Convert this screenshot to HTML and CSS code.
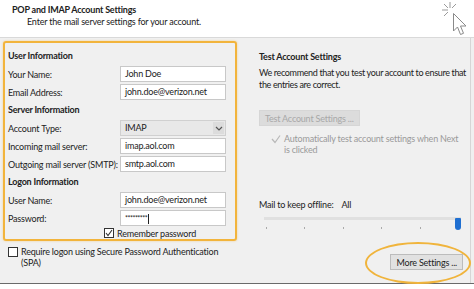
FILE: index.html
```html
<!DOCTYPE html>
<html lang="en">
<head>
    <meta charset="UTF-8">
    <title>POP and IMAP Account Settings</title>
    <link rel="stylesheet" href="styles.css">
</head>
<body>
    <div class="header">
        <div class="title">POP and IMAP Account Settings</div>
        <div class="subtitle">Enter the mail server settings for your account.</div>
        <svg class="cursor" width="30" height="36" viewBox="0 0 30 36">
            <g stroke="#9a9a9a" stroke-width="1" fill="none">
                <line x1="9" y1="1" x2="9" y2="7"/>
                <line x1="1" y1="9" x2="7" y2="9"/>
                <line x1="3" y1="3" x2="7" y2="7"/>
                <line x1="15" y1="3" x2="11" y2="7"/>
                <line x1="3" y1="15" x2="7" y2="11"/>
            </g>
            <path d="M12.5 12.5 L12.5 30 L16.5 26 L19.5 33.5 L22.5 32.3 L19.5 25 L25 25 Z" fill="#fff" stroke="#8a8a8a" stroke-width="1"/>
        </svg>
    </div>

    <div class="main">
        <div class="left">
            <div class="highlight">
                <div class="section">User Information</div>
                <div class="row">
                    <label>Your Name:</label>
                    <div class="field">John Doe</div>
                </div>
                <div class="row">
                    <label>Email Address:</label>
                    <div class="field">john.doe@verizon.net</div>
                </div>
                <div class="section">Server Information</div>
                <div class="row">
                    <label>Account Type:</label>
                    <div class="field select">
                        <span>IMAP</span>
                        <span class="arrow">
                            <svg width="8" height="5" viewBox="0 0 8 5"><path d="M1 1 L4 4 L7 1" stroke="#555" stroke-width="1.2" fill="none"/></svg>
                        </span>
                    </div>
                </div>
                <div class="row">
                    <label>Incoming mail server:</label>
                    <div class="field">imap.aol.com</div>
                </div>
                <div class="row">
                    <label>Outgoing mail server (SMTP):</label>
                    <div class="field">smtp.aol.com</div>
                </div>
                <div class="section">Logon Information</div>
                <div class="row">
                    <label>User Name:</label>
                    <div class="field">john.doe@verizon.net</div>
                </div>
                <div class="row">
                    <label>Password:</label>
                    <div class="field password">*********<span class="caret"></span></div>
                </div>
                <div class="remember">
                    <span class="checkbox checked">
                        <svg width="8" height="8" viewBox="0 0 8 8"><path d="M1 4 L3 6.5 L7 1" stroke="#333" stroke-width="1.1" fill="none"/></svg>
                    </span>
                    Remember password
                </div>
            </div>
            <div class="spa">
                <span class="checkbox"></span>
                <span>Require logon using Secure Password Authentication (SPA)</span>
            </div>
        </div>

        <div class="right">
            <div class="section">Test Account Settings</div>
            <p class="note">We recommend that you test your account to ensure that the entries are correct.</p>
            <div class="btn disabled">Test Account Settings ...</div>
            <div class="auto">
                <span class="tick">
                    <svg width="10" height="10" viewBox="0 0 10 10"><path d="M1 5 L4 8.5 L9 1.5" stroke="#b8b8b8" stroke-width="1.2" fill="none"/></svg>
                </span>
                <span>Automatically test account settings when Next is clicked</span>
            </div>
            <div class="offline">Mail to keep offline:<span class="all">All</span></div>
            <div class="slider">
                <div class="track"></div>
                <div class="ticks">
                    <span></span><span></span><span></span><span></span><span></span><span></span>
                </div>
                <div class="thumb"></div>
            </div>
            <div class="more-wrap">
                <div class="btn more">More Settings ...</div>
                <div class="ring"></div>
            </div>
        </div>
    </div>

    <div class="footer"></div>
</body>
</html>
```

FILE: styles.css
```css
body {
    margin: 0;
    width: 474px;
    height: 289px;
    overflow: hidden;
    background-color: #f0f0f0;
    font-family: Lato, "Noto Sans", sans-serif;
    font-size: 9px;
    letter-spacing: -0.2px;
    color: #222;
}

.header {
    position: relative;
    height: 38px;
    background-color: #fff;
    border-bottom: 1px solid #d9d9d9;
    padding: 3px 0 0 12px;
    box-sizing: border-box;
}

.title {
    font-weight: bold;
    line-height: 13px;
}

.subtitle {
    padding-left: 15px;
    line-height: 12px;
}

.cursor {
    position: absolute;
    right: 3px;
    top: 1px;
}

.main {
    display: flex;
    height: 245px;
}

.left {
    width: 252px;
    padding: 3px 0 0 3px;
    box-sizing: border-box;
}

.highlight {
    width: 234px;
    box-sizing: border-box;
    border: 2px solid #f2b43c;
    border-radius: 3px;
    box-shadow: 0 0 2px rgba(242, 180, 60, 0.6);
    padding: 4px 0 0 3px;
    height: 200px;
}

.section {
    font-weight: bold;
    height: 18px;
    line-height: 18px;
}

.row {
    display: flex;
    align-items: center;
    height: 18px;
}

.row label {
    width: 112px;
    white-space: nowrap;
}

.field {
    width: 106px;
    height: 16px;
    box-sizing: border-box;
    background-color: #fff;
    border: 1px solid #c8c8c8;
    padding-left: 4px;
    line-height: 14px;
}

.select {
    display: flex;
    justify-content: space-between;
    background-color: #e8e8e8;
    border-color: #d0d0d0;
    padding-right: 1px;
}

.select .arrow {
    width: 11px;
    height: 12px;
    margin-top: 1px;
    background-color: #dcdcdc;
    display: flex;
    align-items: center;
    justify-content: center;
}

.password {
    letter-spacing: -0.5px;
    font-size: 7px;
}

.caret {
    display: inline-block;
    width: 1px;
    height: 10px;
    background-color: #222;
    vertical-align: middle;
    margin-left: 1px;
}

.checkbox {
    display: inline-flex;
    align-items: center;
    justify-content: center;
    width: 10px;
    height: 10px;
    box-sizing: border-box;
    border: 1px solid #333;
    background-color: #fff;
    flex: none;
}

.remember {
    display: flex;
    align-items: center;
    gap: 3px;
    padding-left: 96px;
    height: 12px;
}

.spa {
    display: flex;
    gap: 3px;
    padding: 5px 0 0 5px;
    line-height: 11px;
    width: 225px;
}

.spa .checkbox {
    margin-top: 1px;
}

.right {
    flex: 1;
    padding: 10px 0 0 7px;
    border-right: 1px solid #d6d6d6;
    margin-right: 3px;
}

.note {
    margin: 0;
    line-height: 12px;
    padding-top: 1px;
    letter-spacing: -0.35px;
}

.btn {
    display: inline-block;
    height: 16px;
    line-height: 15px;
    box-sizing: border-box;
    padding: 0 5px;
    border: 1px solid #bcbcbc;
    background-color: #e1e1e1;
}

.disabled {
    margin-top: 19px;
    color: #a8a8a8;
    background-color: #dcdcdc;
    border-color: #d6d6d6;
}

.auto {
    display: flex;
    gap: 3px;
    padding: 7px 0 0 12px;
    width: 190px;
    color: #9a9a9a;
    line-height: 11px;
}

.tick {
    flex: none;
    width: 10px;
    padding-top: 1px;
}

.offline {
    margin-top: 44px;
    line-height: 12px;
}

.offline .all {
    margin-left: 8px;
}

.slider {
    position: relative;
    height: 20px;
    margin: 0 9px 0 5px;
}

.track {
    height: 3px;
    margin-top: 6px;
    background-color: #e0e0e0;
}

.ticks {
    display: flex;
    justify-content: space-between;
    margin-top: 7px;
    padding: 0 2px;
}

.ticks span {
    width: 1px;
    height: 2px;
    background-color: #aaa;
}

.thumb {
    position: absolute;
    right: 0;
    top: 1px;
    width: 6px;
    height: 12px;
    background-color: #1f6fd1;
    border-radius: 1px 1px 3px 3px;
}

.more-wrap {
    position: relative;
    display: flex;
    justify-content: flex-end;
    margin: 17px 7px 0 0;
}

.more {
    color: #222;
}

.ring {
    position: absolute;
    right: -8px;
    top: -12px;
    width: 102px;
    height: 38px;
    border: 2px solid #f0b43c;
    border-radius: 50%;
}

.footer {
    height: 7px;
    border-top: 1px solid #6a6a6a;
    background-color: #fff;
}
```
